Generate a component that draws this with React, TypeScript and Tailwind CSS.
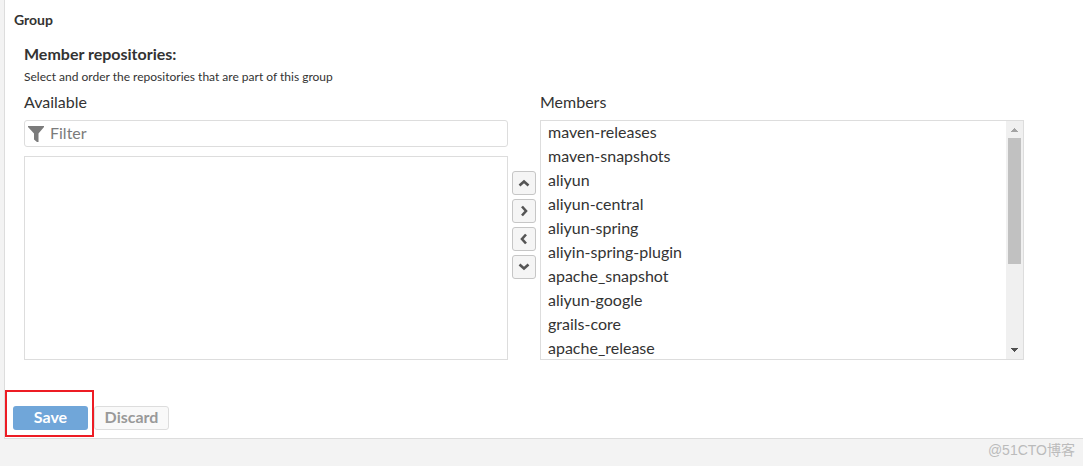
import { useState } from "react";

const initialMembers: string[] = [
  "maven-releases",
  "maven-snapshots",
  "aliyun",
  "aliyun-central",
  "aliyun-spring",
  "aliyin-spring-plugin",
  "apache_snapshot",
  "aliyun-google",
  "grails-core",
  "apache_release",
];

const moveButtons = [
  { label: "Move up", points: "2.500,9.500 7,5.500 11.500,9.500" },
  { label: "Add to members", points: "5,2.500 9,7 5,11.500" },
  { label: "Remove from members", points: "9,2.500 5,7 9,11.500" },
  { label: "Move down", points: "2.500,4.500 7,8.500 11.500,4.500" },
];

const ListScrollbar = () => (
  <div className="flex w-[17px] shrink-0 flex-col items-center bg-[#f0f0f0]" aria-hidden="true">
    <svg className="h-[17px] w-[17px] shrink-0" viewBox="0 0 17 17" shapeRendering="crispEdges">
      <path d="M5 11h7v-1h-1v-1h-1v-1h-1v-1h-1v1h-1v1h-1v1h-1z" fill="#a3a3a3" />
    </svg>
    <div className="h-[126px] w-[13px] bg-[#c1c1c1]" />
    <svg className="mt-auto h-[17px] w-[17px] shrink-0" viewBox="0 0 17 17" shapeRendering="crispEdges">
      <path d="M5 6h7v1h-1v1h-1v1h-1v1h-1v-1h-1v-1h-1v-1h-1z" fill="#505050" />
    </svg>
  </div>
);

const MemberPicker = () => {
  const [filter, setFilter] = useState<string>("");

  return (
    <div className="flex max-w-[1000px] items-center gap-1">
      <div className="flex h-[270px] min-w-0 flex-1 flex-col">
        <label htmlFor="available" className="h-[30px] text-base leading-6">
          Available
        </label>
        <div className="flex h-[27px] items-center rounded-[3px] border border-[#ddd] pl-[3px]">
          <svg className="h-4 w-4 shrink-0" viewBox="0 0 16 16">
            <path d="M0 0h16v1L10.500 7.500V16H9L6 13.500V7.500L0 1z" fill="#7b7b7b" />
          </svg>
          <input
            type="text"
            aria-label="Filter"
            placeholder="Filter"
            value={filter}
            onChange={(e) => setFilter(e.target.value)}
            className="min-w-0 flex-1 px-1.5 pb-0.5 text-base leading-6 placeholder:text-[#7b7b7b] focus:outline-none"
          />
        </div>
        <select
          id="available"
          multiple
          className="mt-[9px] min-h-0 w-full flex-1 appearance-none border border-[#ddd] bg-white focus:outline-none"
        />
      </div>

      <div className="flex flex-col gap-1">
        {moveButtons.map((button) => (
          <button
            key={button.label}
            type="button"
            aria-label={button.label}
            className="flex h-6 w-6 items-center justify-center rounded-[3px] border border-[#c6c6c6] bg-[#f5f5f5]"
          >
            <svg className="h-3.5 w-3.5" viewBox="0 0 14 14">
              <polyline points={button.points} fill="none" stroke="#555" strokeWidth="2.6" />
            </svg>
          </button>
        ))}
      </div>

      <div className="flex h-[270px] min-w-0 flex-1 flex-col">
        <label htmlFor="members" className="h-[30px] text-base leading-6">
          Members
        </label>
        <div className="flex min-h-0 flex-1 border border-[#ddd]">
          <select
            id="members"
            multiple
            className="h-full min-w-0 flex-1 appearance-none border-0 bg-white p-0 text-base [scrollbar-width:none] focus:outline-none"
          >
            {initialMembers.map((name) => (
              <option key={name} value={name} className="h-6 px-[7px] pt-px pb-0 leading-6">
                {name}
              </option>
            ))}
          </select>
          <ListScrollbar />
        </div>
      </div>
    </div>
  );
};

const App = () => {
  return (
    <div className="min-h-screen bg-[#f3f3f3] pl-1 font-['Lato','Noto_Sans_CJK_SC',sans-serif] text-[#333]">
      <form
        onSubmit={(e) => e.preventDefault()}
        className="border-b border-l border-[#ddd] bg-white px-2 pb-2"
      >
        <h2 className="ml-px pt-2 text-sm leading-6 font-bold">Group</h2>
        <div className="pt-2.5 pl-[11px]">
          <h3 className="text-base leading-6 font-bold">Member repositories:</h3>
          <p className="pb-0.5 text-xs leading-[22px]">
            Select and order the repositories that are part of this group
          </p>
          <MemberPicker />
        </div>

        <div className="mt-[46px] flex gap-1.5">
          <div className="relative flex">
            <button
              type="submit"
              className="h-6 w-[75px] rounded-[3px] bg-[#70a6d9] pb-0.5 text-base leading-[22px] font-bold text-white"
            >
              Save
            </button>
            {/* Highlight around the save action */}
            <div className="pointer-events-none absolute -top-4 -right-1.5 -bottom-[7px] -left-2 z-10 border-2 border-[#ed1c24]" />
          </div>
          <button
            type="button"
            className="h-6 w-[75px] rounded-[3px] border border-[#ddd] bg-[#f9f9f9] pb-0.5 text-base leading-5 font-bold text-[#999]"
          >
            Discard
          </button>
        </div>
      </form>
      <p className="pr-2 text-right font-['Liberation_Sans','Noto_Sans_CJK_SC',sans-serif] text-sm leading-[22px] text-[#bbb]">
        @51CTO博客
      </p>
    </div>
  );
};

export default App;
